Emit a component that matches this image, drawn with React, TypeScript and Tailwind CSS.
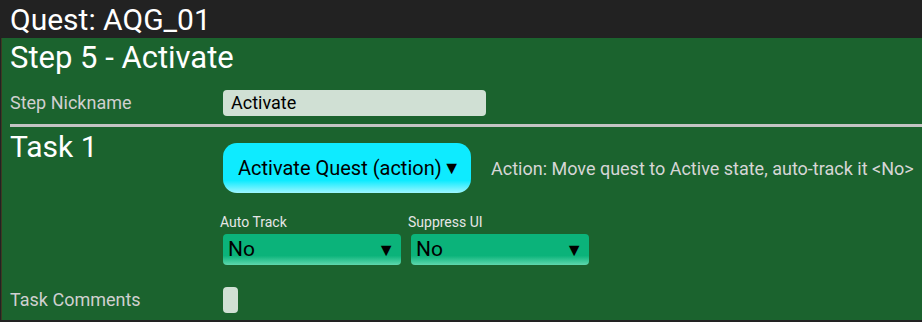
import React from "react";

function Dropdown({ label, value }: { label: string; value: string }) {
  return (
    <div className="flex flex-col">
      <span className="-ml-[3px] text-[14px] leading-[18px] text-[#e6e6e6]">{label}</span>
      <div className="mt-[3px] flex h-[31px] w-[178px] items-center justify-between rounded-[4px] bg-[linear-gradient(to_bottom,#0bb37a_0%,#0bb37a_70%,#5fd8ad_100%)] pl-[5px] pr-[6px]">
        <span className="text-[21px] leading-none text-black">{value}</span>
        <span className="text-[18px] leading-none text-black">▼</span>
      </div>
    </div>
  );
}

function App() {
  return (
    <div className="h-[322px] w-[922px] overflow-hidden bg-[#222222] font-['Roboto',sans-serif]">
      <div className="flex h-[38px] items-center pl-[10px] pt-[2px] text-[30px] leading-none text-white">
        Quest: AQG_01
      </div>
      <div className="ml-[1px] h-[282px] border-l border-[#3d3b22] bg-[#1b632e]">
        <div className="pl-[8px] pt-[2px] text-[31px] leading-[36px] text-white">
          Step 5 - Activate
        </div>
        <div className="mt-[13px] flex items-center">
          <span className="w-[221px] pl-[8px] text-[18px] text-[#d0d0d0]">Step Nickname</span>
          <div className="flex h-[26px] w-[263px] items-center rounded-[4px] bg-[#d0e0d4] pl-[8px] text-[18px] text-black">
            Activate
          </div>
        </div>
        <div className="ml-[8px] mt-[8px] h-[3px] bg-[#c4c4c4]" />
        <div className="flex">
          <span className="w-[221px] pl-[8px] pt-[2px] text-[30px] leading-[36px] text-white">Task 1</span>
          <div className="flex flex-col">
            <div className="mt-[16px] flex items-center">
              <div className="flex h-[50px] w-[248px] items-center rounded-[14px] bg-[linear-gradient(to_bottom,#0eebff_0%,#0eebff_75%,#9ff6ff_100%)] pl-[15px] text-[20px] text-black">
                Activate Quest (action)
                <span className="ml-[1px] text-[18px] leading-none">▼</span>
              </div>
              <span className="ml-[20px] text-[18px] text-[#d6d6d6]">
                Action: Move quest to Active state, auto-track it &lt;No&gt;
              </span>
            </div>
            <div className="mt-[20px] flex gap-[10px]">
              <Dropdown label="Auto Track" value="No" />
              <Dropdown label="Suppress UI" value="No" />
            </div>
          </div>
        </div>
        <div className="mt-[21px] flex items-center">
          <span className="w-[221px] pl-[8px] text-[18px] text-[#d0d0d0]">Task Comments</span>
          <div className="h-[26px] w-[15px] rounded-[4px] bg-[#d0e0d4]" />
        </div>
      </div>
    </div>
  );
}

export default App;
